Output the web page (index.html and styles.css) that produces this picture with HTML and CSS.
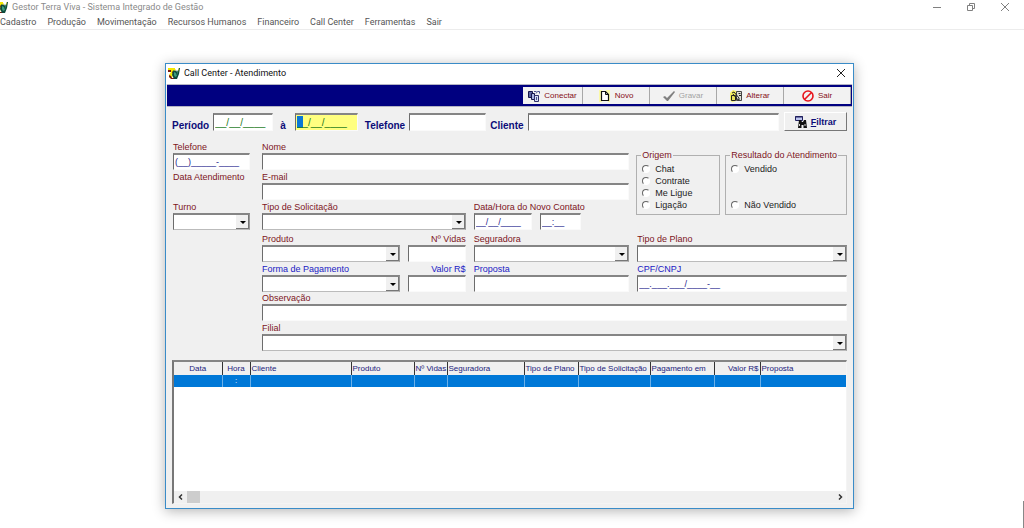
FILE: index.html
```html
<!DOCTYPE html>
<html lang="pt-BR">
<head>
<meta charset="utf-8">
<title>Gestor Terra Viva - Sistema Integrado de Gestão</title>
<link rel="stylesheet" href="styles.css">
</head>
<body>
<svg width="0" height="0" class="defs" aria-hidden="true">
  <symbol id="app" viewBox="0 0 12 12">
    <path d="M0 1h7v2L5 6l-1 5H2L1 8l2-3H0z" fill="#f4e800"/>
    <path d="M0 3h3v2H0zM1 8l2 1 1 2h3v1H3L1 10zM4 5l1-1v3z" fill="#7b1a10"/>
    <path d="M6 3l1 1 1-1 1 2 2-4h1l-1 6-2 5H6L4 8l1-4z" fill="#0d4a3c"/>
    <path d="M6 5l2 1 1 3-2 1-1-2zM9 5l1-1-1 4z" fill="#3c9c7c"/>
    <path d="M7 2l1 1-1 1zM10 2l1-1-1 4z" fill="#e8dc20"/>
  </symbol>
</svg>
<header class="app-title">
  <svg class="app-icon"><use href="#app"/></svg>
  <span class="app-name">Gestor Terra Viva - Sistema Integrado de Gestão</span>
  <div class="controls">
    <button aria-label="Minimizar"><svg viewBox="0 0 10 10"><path d="M1 5.500h8"/></svg></button>
    <button aria-label="Restaurar"><svg viewBox="0 0 10 10"><path d="M1.500 3.500h5v5h-5zM3.500 3V1.500h5v5H7"/></svg></button>
    <button aria-label="Fechar"><svg viewBox="0 0 10 10"><path d="M1 1l8 8M9 1L1 9"/></svg></button>
  </div>
</header>
<nav class="menu">
  <a href="#">Cadastro</a><a href="#">Produção</a><a href="#">Movimentação</a><a href="#">Recursos Humanos</a><a href="#">Financeiro</a><a href="#">Call Center</a><a href="#">Ferramentas</a><a href="#">Sair</a>
</nav>

<main class="window">
  <div class="win-title">
    <svg class="win-icon"><use href="#app"/></svg>
    <h1>Call Center - Atendimento</h1>
    <button class="win-close" aria-label="Fechar janela"><svg viewBox="0 0 10 10"><path d="M1 1l8 8M9 1L1 9"/></svg></button>
  </div>

  <div class="toolbar">
    <button class="tool narrow"><svg viewBox="0 0 12 12"><path d="M.5 1.500h4v6h-4z" fill="#5a64a0" stroke="#15154a"/><path d="M3.500 3.500h3v6h-3z" fill="#a8b4e0" stroke="#15154a"/><path d="M6.500 5.500h4v6h-4z" fill="#d4dcf4" stroke="#30306a"/><path d="M8.500 7v3M6 1.500h2.500M8 3.500l1.500-2h2v2" fill="none" stroke="#4a5490"/></svg>Conectar</button>
    <button class="tool"><svg viewBox="0 0 12 12"><path d="M0 0h3v12H0zM7 0h4v12H9z" fill="#fbf9a8"/><path d="M2.500 1.500h4l3 3v6h-7z" fill="#fff" stroke="#111" stroke-width="1.200"/><path d="M6.500 1.500v3h3" fill="none" stroke="#111"/></svg>Novo</button>
    <button class="tool" disabled><svg viewBox="0 0 12 12"><path d="M0 7l2-1 2 2 7-7 1 1-7 9H4z" fill="#808080"/></svg>Gravar</button>
    <button class="tool"><svg viewBox="0 0 12 12"><path d="M0 3l3-3 3 1v10l-4 1-2-2z" fill="#f4ef62"/><path d="M6.500 1.500h5v9h-5z" fill="#e0e2d8" stroke="#444"/><path d="M1.500 5.500h4v5h-4z" fill="#e7e35a" stroke="#222"/><path d="M2 3l2-1 5 6v2L7 9 3 4M8.500 3.500h2M9 5.500h2" fill="none" stroke="#222"/></svg>Alterar</button>
    <button class="tool"><svg viewBox="0 0 12 12"><circle cx="6" cy="6" r="5" fill="none" stroke="#e8141c" stroke-width="1.600"/><path d="M2.500 9.500l7-7" stroke="#e8141c" stroke-width="1.600"/></svg>Sair</button>
  </div>

  <form class="content">
    <div class="filter">
      <label for="f-ini">Período</label>
      <input id="f-ini" class="date green" value="__/__/____">
      <label for="f-fim">à</label>
      <input id="f-fim" class="date green active" value="__/__/____">
      <label for="f-tel">Telefone</label>
      <input id="f-tel" class="phone">
      <label for="f-cli">Cliente</label>
      <input id="f-cli" class="client">
      <button type="button" class="filter-btn"><svg viewBox="0 0 12 12"><path d="M.5.5h7v4h-7z" fill="#bcc4ee" stroke="#20205e"/><path d="M0 1h8" stroke="#20205e"/><path d="M4 4h2l1 2h1l1-2h2l1 8H8.500V9h-2v3H3z" fill="#111"/><path d="M4.500 8v2M10 8v2" stroke="#d8d8d8"/></svg><span><u>F</u>iltrar</span></button>
    </div>

    <div class="form-grid">
      <div class="field side"><label for="tel">Telefone</label><input id="tel" value="(__)_____-____"></div>
      <div class="field span3"><label for="nome">Nome</label><input id="nome"></div>
      <div class="groups">
        <fieldset class="origin">
          <legend>Origem</legend>
          <label><input type="radio" name="origem">Chat</label>
          <label><input type="radio" name="origem">Contrate</label>
          <label><input type="radio" name="origem">Me Ligue</label>
          <label><input type="radio" name="origem">Ligação</label>
        </fieldset>
        <fieldset class="result">
          <legend>Resultado do Atendimento</legend>
          <label><input type="radio" name="resultado">Vendido</label>
          <label><input type="radio" name="resultado">Não Vendido</label>
        </fieldset>
      </div>

      <div class="field side"><span class="caption">Data Atendimento</span></div>
      <div class="field span3"><label for="email">E-mail</label><input id="email"></div>

      <div class="field side"><label for="turno">Turno</label><div class="combo"><select id="turno"></select></div></div>
      <div class="field span2"><label for="solic">Tipo de Solicitação</label><div class="combo"><select id="solic"></select></div></div>
      <div class="field"><label for="data">Data/Hora do Novo Contato</label>
        <div class="pair"><input id="data" class="w-date" value="__/__/____"><input class="w-time" aria-label="Hora do novo contato" value="__:__"></div>
      </div>

      <div class="field first lower"><label for="prod">Produto</label><div class="combo"><select id="prod"></select></div></div>
      <div class="field right lower"><label for="vidas">Nº Vidas</label><input id="vidas"></div>
      <div class="field lower"><label for="seg">Seguradora</label><div class="combo"><select id="seg"></select></div></div>
      <div class="field lower"><label for="plano">Tipo de Plano</label><div class="combo"><select id="plano"></select></div></div>

      <div class="field first blue"><label for="pag">Forma de Pagamento</label><div class="combo"><select id="pag"></select></div></div>
      <div class="field right blue"><label for="valor">Valor R$</label><input id="valor"></div>
      <div class="field blue"><label for="prop">Proposta</label><input id="prop"></div>
      <div class="field blue"><label for="cpf">CPF/CNPJ</label><input id="cpf" value="__.___.___/____-__"></div>

      <div class="field wide"><label for="obs">Observação</label><input id="obs"></div>
      <div class="field wide last"><label for="filial">Filial</label><div class="combo"><select id="filial"></select></div></div>
    </div>
  </form>

  <section class="list">
    <table>
      <colgroup><col class="c48"><col class="c28"><col class="c101"><col class="c63"><col class="c33"><col class="c77"><col class="c54"><col class="c72"><col class="c64"><col class="c46"><col></colgroup>
      <thead><tr><th class="mid">Data</th><th class="mid">Hora</th><th>Cliente</th><th>Produto</th><th>Nº Vidas</th><th>Seguradora</th><th>Tipo de Plano</th><th>Tipo de Solicitação</th><th>Pagamento em</th><th class="end">Valor R$</th><th>Proposta</th></tr></thead>
      <tbody><tr><td></td><td class="mid">:</td><td></td><td></td><td></td><td></td><td></td><td></td><td></td><td></td><td></td></tr></tbody>
    </table>
    <div class="scroll">
      <button aria-label="Rolar à esquerda"><svg viewBox="0 0 6 6"><path d="M4 .5L1.500 3 4 5.500"/></svg></button>
      <span class="thumb"></span>
      <button class="fwd" aria-label="Rolar à direita"><svg viewBox="0 0 6 6"><path d="M2 .5L4.500 3 2 5.500"/></svg></button>
    </div>
  </section>
</main>
<div class="edge"></div>
</body>
</html>
```
FILE: styles.css
```css
* { box-sizing: border-box; }
body { margin: 0; background: #fff; font: 9px/12px "Liberation Sans", Arial, sans-serif; color: #222; min-height: 100vh; }
button, input, select { font: inherit; margin: 0; padding: 0; border: 0; border-radius: 0; outline: 0; }
button { background: none; }
.defs { position: absolute; }

.app-title { display: flex; align-items: center; height: 14px; color: #8a8a8a; font-family: Roboto, "Noto Sans", sans-serif; }
.app-icon { width: 12px; height: 12px; margin-left: -4px; }
.app-name { margin-left: 4px; }
.controls { margin-left: auto; display: flex; gap: 24px; padding-right: 14px; }
.controls button { width: 10px; height: 10px; display: flex; }
.controls svg { width: 10px; height: 10px; fill: none; stroke: #808080; }
.menu { display: flex; gap: 11px; height: 16px; border-bottom: 1px solid #ececec; font-family: Roboto, "Noto Sans", sans-serif; line-height: 17px; }
.menu a { color: #555; text-decoration: none; }

.window { position: absolute; left: 165px; right: 170px; top: 63px; background: #f0f0f0; border: 1px solid #3a8cc8; box-shadow: 0 2px 12px rgba(0, 0, 0, .3); padding-bottom: 4px; }
.win-title { display: flex; align-items: center; height: 20px; padding: 0 7px 2px 2px; background: #fff; font-family: Roboto, "Noto Sans", sans-serif; }
.win-icon { width: 12px; height: 12px; }
.win-title h1 { margin: 0 0 0 4px; font: inherit; color: #111; }
.win-close { margin-left: auto; width: 10px; height: 10px; display: flex; }
.win-close svg { width: 10px; height: 10px; fill: none; stroke: #222; }

.toolbar { display: flex; justify-content: flex-end; height: 23px; margin: 0 1px; padding: 2px 1px 2px 0; background: #000080; border: 1px solid #b4b4c4; border-width: 1px 0; }
.tool { display: flex; align-items: center; justify-content: center; gap: 4px; width: 67px; background: #f2f2f2; border-right: 1px solid #a8a8a8; color: #860f17; font-size: 8px; }
.tool.narrow { width: 60px; }
.tool svg { width: 12px; height: 12px; }
.tool:disabled { color: #a2a2a2; }

.filter { display: flex; align-items: flex-end; height: 24px; padding: 0 6px; color: #0c0c78; font-size: 10px; font-weight: bold; }
.content input:not([type="radio"]), .content select { display: block; height: 17px; min-width: 0; padding-left: 1px; background: #fff; border: 1px solid #fafafa; border-top: 2px solid #858585; border-left: 1px solid #6c6c6c; color: #23238c; }
.filter input { font-weight: normal; }
.content .filter input { height: 18px; }
.filter label { margin-right: 4px; line-height: 10px; }
.filter .date { width: 60px; margin-right: 7px; }
.filter .date.active { width: 63px; margin-left: 5px; }
.content .filter .active { background: linear-gradient(#0a78d7, #0a78d7) 1px 1px / 6px 12px no-repeat #ffff80; }
.filter .phone { width: 77px; margin-right: 4px; }
.filter .client { flex: 1; }
.content .filter .green { color: #1b7a1b; }
.filter-btn { display: flex; align-items: center; justify-content: center; gap: 4px; width: 63px; height: 19px; margin-left: 5px; border: 1px solid #fff; border-right-color: #777; border-bottom: 1px solid #777; color: #0c0c78; font-size: 9px; font-weight: bold; }
.filter-btn svg { width: 12px; height: 12px; }

.form-grid { display: grid; grid-template-columns: 81px minmax(0, 138fr) minmax(0, 58fr) minmax(0, 156fr) minmax(0, 210fr); column-gap: 8px; row-gap: 1px; padding: 10px 6px 0 7px; }
.field { color: #7d141c; white-space: nowrap; }
.field > label, .caption { display: block; height: 12px; }
.field > input, .combo, .field select { width: 100%; }
.content .field > .combo, .pair { height: 17px; }
.side { grid-column: 1; padding-right: 4px; }
.first { grid-column: 2; }
.span2 { grid-column: span 2; }
.span3 { grid-column: 2 / 5; }
.wide { grid-column: 2 / 6; }
.field.wide > label { height: 11px; line-height: 11px; }
.last { padding-top: 1px; }
.right > label { text-align: right; }
.lower { padding-top: 2px; }
.field.blue { color: #2020c4; }
.pair { display: flex; gap: 8px; }
.w-date { width: 58px; }
.w-time { width: 41px; }
.combo { position: relative; }
.combo select { appearance: none; }
.content .combo select { border-right: 1px solid #999; border-bottom-color: #bbb; }
.combo::before { content: ""; position: absolute; right: 1px; top: 2px; bottom: 1px; width: 12px; background: #f0f0f0; border-right: 1px solid #777; border-bottom: 1px solid #777; pointer-events: none; }
.combo::after { content: ""; position: absolute; right: 4px; top: 8px; border: 3px solid transparent; border-top-color: #000; border-bottom: 0; pointer-events: none; }

.groups { grid-column: 5; grid-row: 1 / 4; display: flex; gap: 5px; padding-top: 8px; align-items: flex-start; margin-left: -1px; }
fieldset { display: flex; flex-direction: column; min-width: 0; height: 66px; margin: 0; padding: 2px 4px 3px; border: 1px solid #b0b0b0; color: #222; }
fieldset legend { padding: 0 1px; color: #7d141c; }
fieldset.origin { flex: 0 1 84px; }
fieldset.result { flex: 1; justify-content: space-between; }
fieldset label { display: flex; align-items: center; gap: 5px; height: 12px; white-space: nowrap; }
input[type="radio"] { appearance: none; width: 8px; height: 8px; margin-left: 1px; border: 1px solid #666; border-right-color: #fff; border-bottom-color: #fff; border-radius: 50%; background: #fff; }

.list { margin: 9px 6px 0; background: #fff; border: 1px solid #f4f4f4; border-top: 2px solid #858585; border-left: 2px solid #777; }
table { width: 100%; table-layout: fixed; border-collapse: collapse; font-size: 8px; line-height: 12px; margin-bottom: 104px; }
th { height: 13px; padding: 0 1px; background: #f0f0f0; border-left: 1px solid #333; color: #1b1b7c; font-weight: normal; text-align: left; white-space: nowrap; }
td { height: 12px; padding: 0; background: #0078d7; border-left: 1px solid #6cb0e8; color: #fff; }
th:first-child, td:first-child { border-left: 0; }
.mid { text-align: center; }
.end { text-align: right; }
.c48 { width: 48px; }
.c28 { width: 28px; }
.c101 { width: 101px; }
.c63 { width: 63px; }
.c33 { width: 33px; }
.c77 { width: 77px; }
.c54 { width: 54px; }
.c72 { width: 72px; }
.c64 { width: 64px; }
.c46 { width: 46px; }
.scroll { display: flex; height: 12px; background: #f0f0f0; }
.scroll button { width: 13px; display: flex; align-items: center; justify-content: center; }
.scroll svg { width: 6px; height: 6px; fill: none; stroke: #333; stroke-width: 1.5; }
.scroll .fwd { margin-left: auto; }
.thumb { width: 13px; background: #cdcdcd; }
.edge { position: absolute; right: 0; bottom: 0; width: 1px; height: 27px; background: #888; }
```
